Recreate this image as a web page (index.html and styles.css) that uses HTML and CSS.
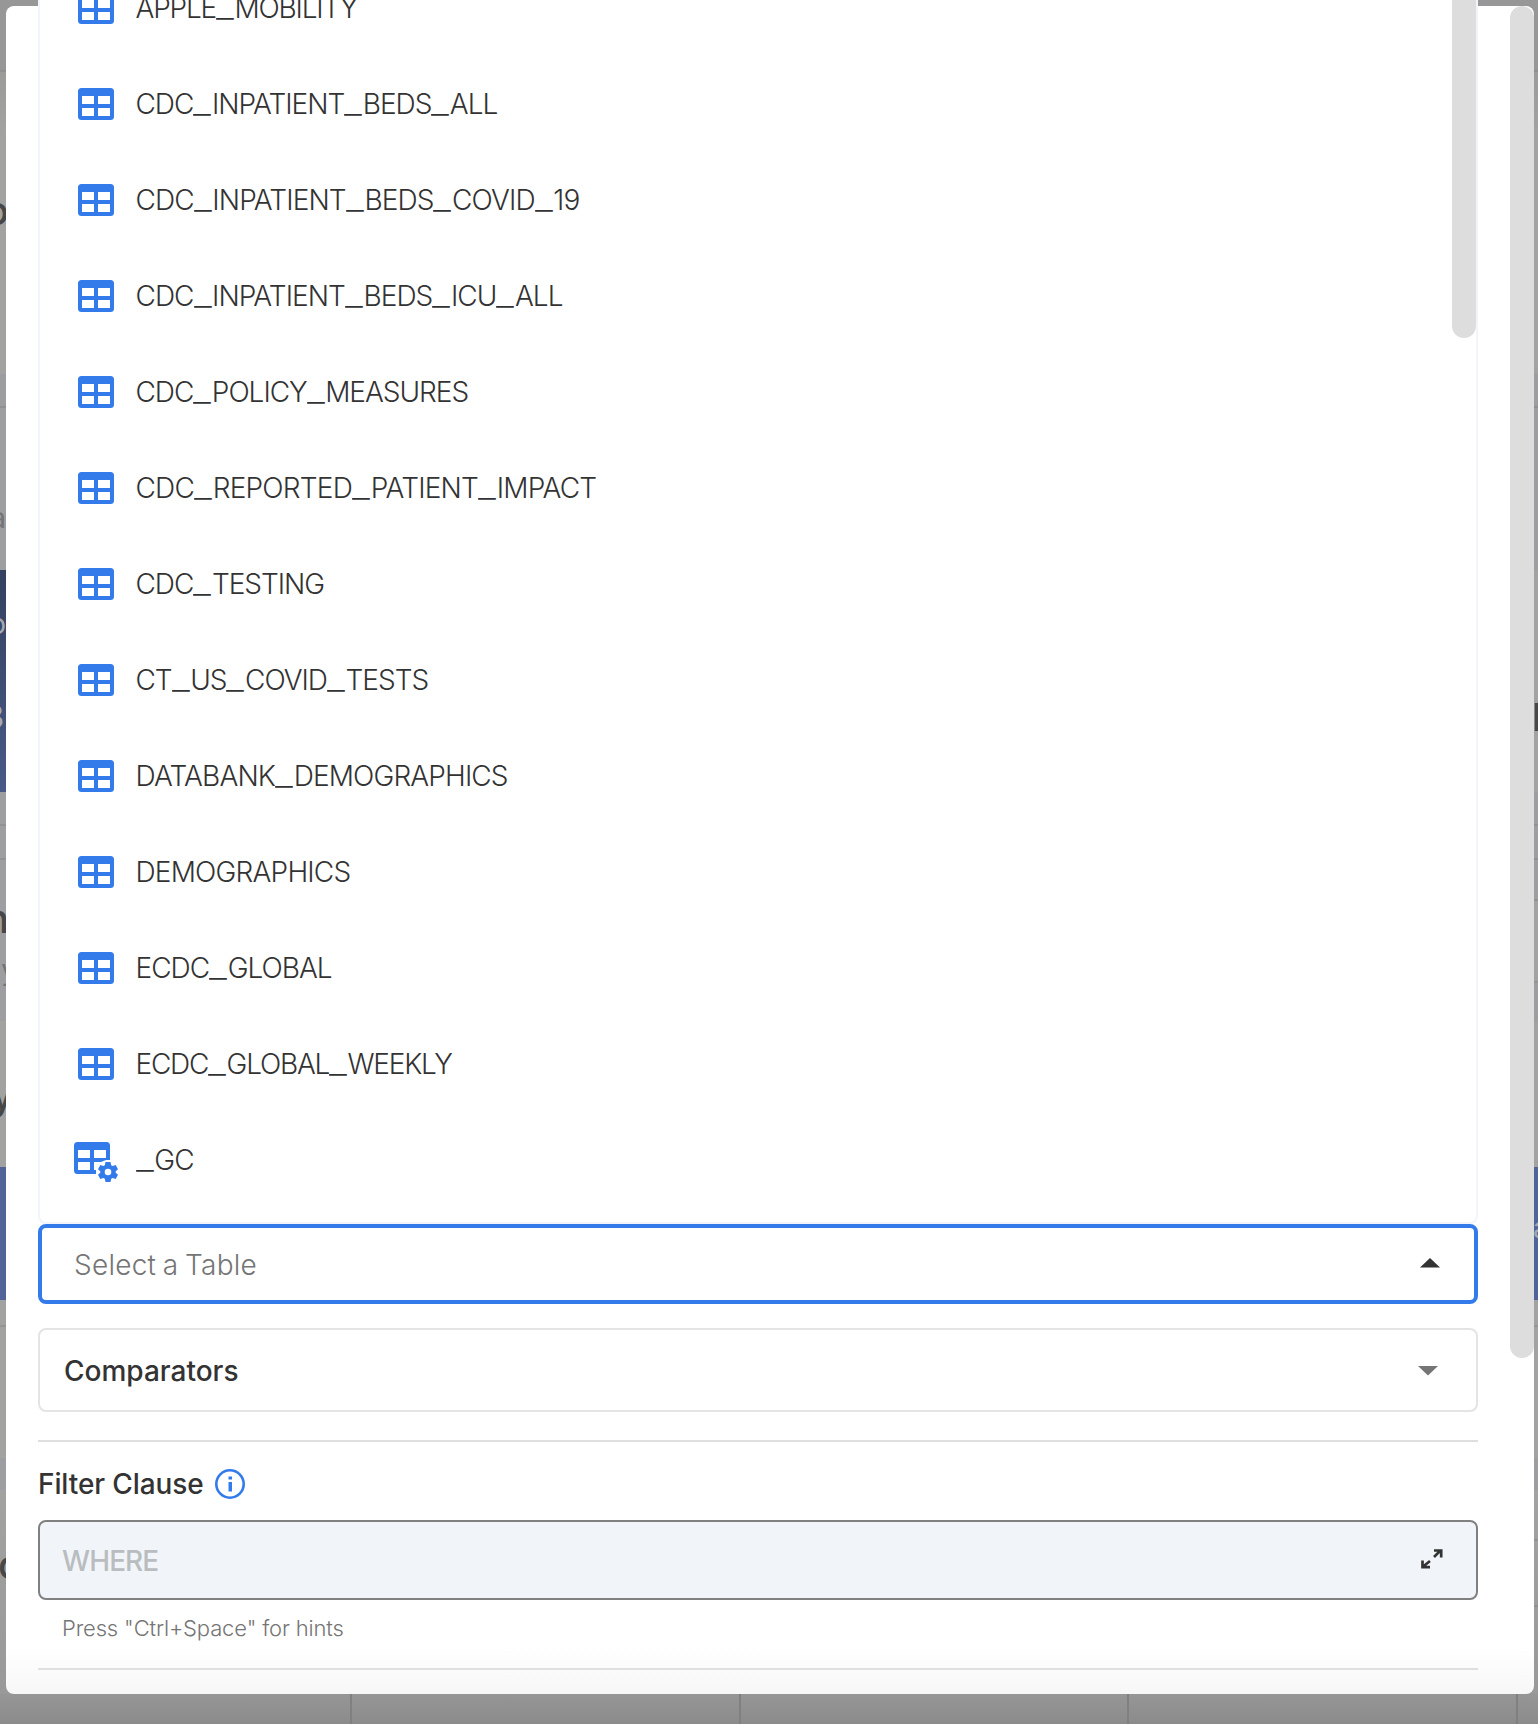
FILE: index.html
```html
<!DOCTYPE html>
<html lang="en">
<head>
<meta charset="utf-8">
<title>Select a Table</title>
<link rel="stylesheet" href="styles.css">
</head>
<body>
<svg class="defs" width="0" height="0">
  <symbol id="table" viewBox="0 0 36 32"><path fill="#337bea" fill-rule="evenodd" d="M3.500 0H32.500A3.500 3.500 0 0 1 36 3.500V28.500A3.500 3.500 0 0 1 32.500 32H3.500A3.500 3.500 0 0 1 0 28.500V3.500A3.500 3.500 0 0 1 3.500 0ZM4 8V16H16V8ZM20 8V16H32V8ZM4 20V28H16V20ZM20 20V28H32V20Z"/></symbol>
  <symbol id="table-gear" viewBox="0 0 44 40">
    <path fill="#337bea" fill-rule="evenodd" d="M3.500 0H32.500A3.500 3.500 0 0 1 36 3.500V18H32L27 20H20V28H22V32H3.500A3.500 3.500 0 0 1 0 28.500V3.500A3.500 3.500 0 0 1 3.500 0ZM4 8V16H16V8ZM20 8V16H32V8ZM4 20V28H16V20Z"/>
    <path fill="#337bea" fill-rule="evenodd" d="M31.500 20H36.500L37.200 23.200L38.700 24.100L41.700 23L44 27.200L41.700 29.200V30.800L44 32.800L41.700 37L38.700 35.900L37.200 36.800L36.500 40H31.500L30.800 36.800L29.300 35.900L26.300 37L24 32.800L26.300 30.800V29.200L24 27.200L26.300 23L29.300 24.100L30.800 23.200ZM34 26.700A3.300 3.300 0 1 0 34 33.300A3.300 3.300 0 1 0 34 26.700Z"/>
  </symbol>
</svg>
<main class="page">
  <div class="backdrop">
    <div class="band b1"></div>
    <div class="band b2"><div class="left"><span class="big o1">o</span></div></div>
    <div class="band b3"></div>
    <div class="band b4"><div class="left"><span class="small a1">a</span></div></div>
    <div class="band b5"><div class="left navy"><span class="small o2">o</span><b class="three">3</b></div><div class="right"><span class="n2">n</span></div></div>
    <div class="band b6"></div>
    <div class="band b7"></div>
    <div class="band b8"><div class="left"><span class="big n1">n</span><span class="small y1">y</span></div><div class="right side8"></div></div>
    <div class="band b9"><div class="left start"><span class="big y2">y</span></div></div>
    <div class="band b10"><div class="right"><span class="small a2">a</span></div></div>
    <div class="band b11"></div>
    <div class="band b12"></div>
    <div class="band b13"></div>
    <div class="band b14"><div class="left start"><span class="big c1">c</span></div><div class="right side14"></div></div>
    <div class="columns"><i></i><i></i><i></i><i></i><i></i></div>
  </div>
  <section class="dialog">
    <div class="content">
      <div class="picker">
        <ul class="menu">
          <li><svg><use href="#table"/></svg><span class="t1">APPLE<i>_</i>MOBILITY</span></li>
          <li><svg><use href="#table"/></svg><span class="t2">CDC<i>_</i>INPATIENT<i>_</i>BEDS<i>_</i>ALL</span></li>
          <li><svg><use href="#table"/></svg><span class="t3">CDC<i>_</i>INPATIENT<i>_</i>BEDS<i>_</i>COVID<i>_</i>19</span></li>
          <li><svg><use href="#table"/></svg><span class="t4">CDC<i>_</i>INPATIENT<i>_</i>BEDS<i>_</i>ICU<i>_</i>ALL</span></li>
          <li><svg><use href="#table"/></svg><span class="t5">CDC<i>_</i>POLICY<i>_</i>MEASURES</span></li>
          <li><svg><use href="#table"/></svg><span class="t6">CDC<i>_</i>REPORTED<i>_</i>PATIENT<i>_</i>IMPACT</span></li>
          <li><svg><use href="#table"/></svg><span class="t7">CDC<i>_</i>TESTING</span></li>
          <li><svg><use href="#table"/></svg><span class="t8">CT<i>_</i>US<i>_</i>COVID<i>_</i>TESTS</span></li>
          <li><svg><use href="#table"/></svg><span class="t9">DATABANK<i>_</i>DEMOGRAPHICS</span></li>
          <li><svg><use href="#table"/></svg><span class="t10">DEMOGRAPHICS</span></li>
          <li><svg><use href="#table"/></svg><span class="t11">ECDC<i>_</i>GLOBAL</span></li>
          <li><svg><use href="#table"/></svg><span class="t12">ECDC<i>_</i>GLOBAL<i>_</i>WEEKLY</span></li>
          <li><svg class="gear"><use href="#table-gear"/></svg><span class="t13"><i>_</i>GC</span></li>
        </ul>
        <div class="menu-thumb"></div>
        <div class="select"><span>Select a Table</span><svg width="20" height="10"><path fill="#333" d="M0 9.500L10 0L20 9.500Z"/></svg></div>
      </div>
      <div class="comparators"><span>Comparators</span><svg width="20" height="10"><path fill="#757575" d="M0 0H20L10 9.500Z"/></svg></div>
      <hr>
      <div class="label"><span>Filter Clause</span><svg width="30" height="30"><circle cx="15" cy="15" r="13.700" fill="none" stroke="#337bea" stroke-width="2.600"/><path fill="#337bea" d="M13.500 7.500H17V10.500H13.500ZM13.500 13H17V22.500H13.500Z"/></svg></div>
      <div class="where"><span>WHERE</span><svg width="22" height="20"><path fill="none" stroke="#333" stroke-width="2.700" d="M13 1.500H20.200V8.500M13 8L19.500 1.500M9 18.200H1.500V11.500M9 12L1.500 18"/></svg></div>
      <p class="hint">Press "Ctrl+Space" for hints</p>
      <hr class="last">
    </div>
    <div class="scrollbar"></div>
  </section>
</main>
</body>
</html>
```
FILE: styles.css
```css
body { margin: 0; font-family: Inter, sans-serif; color: #333; background: #999; }
.defs { position: absolute; }
.page { display: grid; width: 1538px; height: 1724px; overflow: hidden; }
.backdrop, .dialog { grid-area: 1 / 1; }

/* dimmed page behind the dialog */
.band { box-sizing: border-box; display: flex; justify-content: space-between; overflow: hidden; background: #a2a2a1; }
.left { display: flex; flex-direction: column; align-items: flex-end; width: 6px; overflow: hidden; line-height: 40px; }
.left.start { align-items: flex-start; }
.right { width: 4px; margin-left: auto; overflow: hidden; line-height: 40px; }
.right span { display: block; }
.big { font-size: 40px; font-weight: 500; color: #474747; }
.small { font-size: 28px; color: #747474; }
.b1 { height: 72px; background: #979797; border-bottom: 2px solid #909090; }
.b2 { height: 302px; background: linear-gradient(#9b9b9a, #a2a2a0 60px); }
.b3 { height: 34px; background: #9c9da1; border-bottom: 2px solid #919194; }
.b4 { height: 162px; background: #9d9ea2; }
.b5 { height: 222px; }
.b6, .b7 { height: 34px; background: #9d9ea1; border-bottom: 2px solid #929294; }
.b8 { height: 161px; background: #9d9ea1; }
.b9 { height: 146px; }
.b10 { height: 133px; background: #50649a; }
.b11 { height: 27px; border-bottom: 2px solid #959595; }
.b12 { height: 131px; }
.b13 { height: 32px; background: #9d9ea1; }
.b14 { height: 204px; background: linear-gradient(#a2a2a1, #999); }
.navy { background: linear-gradient(#34415f, #475a87); }
.o1 { margin: 119px -3px 0 0; }
.a1 { margin: 90px 0 0; }
.o2 { margin: 34px 0 0; color: #a5a8af; }
.three { margin: 53px 2px 0 0; font-size: 34px; color: #a5a8af; }
.right .n2 { margin: 123px 0 0 -3px; font-size: 52px; font-weight: 500; color: #474747; }
.n1 { margin: 39px -3px 0 0; }
.y1 { margin: 11px -11px 0 0; }
.y2 { margin: 54px 0 0 -9px; }
.right .a2 { margin: 41px 0 0 -1px; color: #a5a8af; }
.c1 { margin: 55px 0 0 -2px; }
.side8 { box-sizing: border-box; height: 123px; margin-top: 0; background: linear-gradient(#9d9ea1 39px, #929292 39px 41px, #a2a2a1 41px); border-bottom: 2px solid #959595; }
.side14 { background: linear-gradient(transparent 49px, #929292 49px 51px, transparent 51px 115px, #909090 115px 117px, transparent 117px); }
.columns { display: grid; grid-template-columns: 352px 389px 388px 389px 20px; height: 30px; background: linear-gradient(#969696, #8b8b8b); }
.columns i { border-right: 2px solid #808080; }
.columns i:last-child { border: 0; }

.dialog { box-sizing: border-box; display: flex; justify-content: space-between; width: 1528px; height: 1688px; margin: 6px 4px 30px 6px; padding-left: 32px; border-radius: 8px; background: linear-gradient(#fff 1640px, #f7f7f7); }
.content { width: 1440px; padding-top: 1218px; }
.picker { position: relative; }
.menu { position: absolute; left: 0; bottom: 80px; box-sizing: border-box; width: 1440px; height: 1300px; margin: 0; padding: 0 38px 14px; border: 2px solid #f1f5fa; border-radius: 8px; background: #fff; list-style: none; display: flex; flex-direction: column; justify-content: flex-end; font-size: 28px; font-weight: 300; }
.menu li { display: flex; align-items: center; gap: 22px; height: 96px; flex: none; }
.menu svg { width: 36px; height: 32px; }
.menu .gear { width: 44px; height: 40px; margin: 4px -4px 0; }
.menu i { display: inline-block; margin-right: 7px; font-style: normal; transform: scaleX(1.42); transform-origin: left; }
.menu span { margin-left: -.5px; }
.t1 { letter-spacing: -1.18px; }
.t2 { letter-spacing: -1.02px; }
.t3 { letter-spacing: -.9px; }
.t4 { letter-spacing: -.96px; }
.t5 { letter-spacing: -1.03px; }
.t6 { letter-spacing: -.8px; }
.t7 { letter-spacing: -1.02px; }
.t8 { letter-spacing: -1.01px; }
.t9 { letter-spacing: -.87px; }
.t10 { letter-spacing: -.8px; }
.t11 { letter-spacing: -1px; }
.t12 { letter-spacing: -1.22px; }
.t13 { letter-spacing: -.8px; }
.menu-thumb { position: absolute; right: 2px; bottom: 966px; width: 24px; height: 400px; border-radius: 12px; background: #ddd; }
.select { box-sizing: border-box; display: flex; align-items: center; justify-content: space-between; height: 80px; padding: 0 34px 0 32px; border: 4px solid #337bea; border-radius: 8px; background: #fff; font-size: 28px; font-weight: 300; color: #757575; letter-spacing: .25px; word-spacing: -1.5px; }
.select span, .comparators span, .where span { padding-top: 2px; }
.select svg, .where svg { margin-bottom: 2px; }
.comparators { box-sizing: border-box; display: flex; align-items: center; justify-content: space-between; height: 84px; margin-top: 24px; padding: 0 38px 0 24px; border: 2px solid #e4e4e4; border-radius: 8px; font-size: 28px; font-weight: 500; }
.comparators svg { margin-top: 2px; }
hr { height: 2px; margin: 28px 0 0; border: 0; background: #dfdfdf; }
.label { display: flex; align-items: center; gap: 11px; height: 34px; margin-top: 25px; font-size: 28px; font-weight: 500; letter-spacing: -.1px; }
.where { box-sizing: border-box; display: flex; align-items: center; justify-content: space-between; height: 80px; margin-top: 19px; padding: 0 33px 0 22px; border: 2px solid #808080; border-radius: 8px; background: #f1f5fa; font-size: 28px; font-weight: 500; letter-spacing: -.9px; color: #b9bdc0; }
.hint { margin: 14px 0 0 24px; font-size: 22px; line-height: 28px; font-weight: 300; letter-spacing: -.15px; color: #757575; }
.last { margin-top: 26px; }
.scrollbar { width: 24px; height: 1352px; border-radius: 12px; background: #ddd; }
```
